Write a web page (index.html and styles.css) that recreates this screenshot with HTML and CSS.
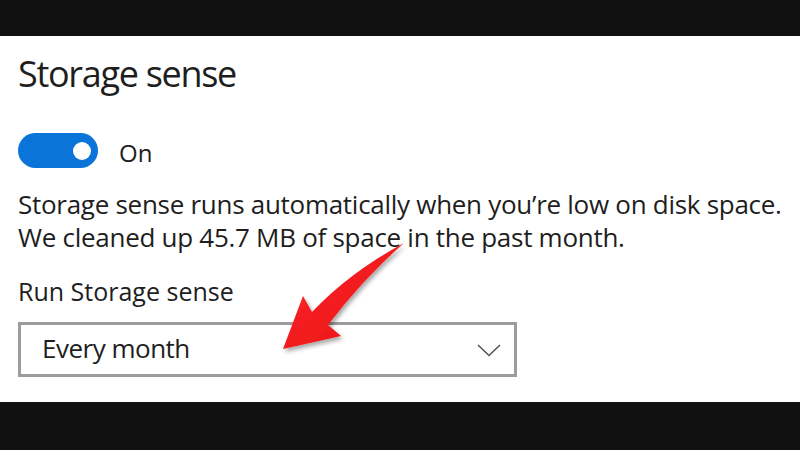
FILE: index.html
```html
<!DOCTYPE html>
<html lang="en">
<head>
<meta charset="utf-8">
<title>Storage sense</title>
<link rel="stylesheet" href="styles.css">
</head>
<body>
<div class="bar"></div>
<main class="panel">
  <h1 class="title">Storage sense</h1>
  <div class="toggle-row">
    <span class="toggle"><span class="knob"></span></span>
    <span class="toggle-label">On</span>
  </div>
  <p class="desc">
    <span class="line">Storage sense runs automatically when you’re low on disk space.</span>
    <span class="line">We cleaned up 45.7 MB of space in the past month.</span>
  </p>
  <div class="field-label">Run Storage sense</div>
  <div class="select">
    <span class="select-value">Every month</span>
    <svg class="chevron" width="24" height="13" viewBox="0 0 24 13"><path d="M1 1 L12 11.5 L23 1" fill="none" stroke="#555" stroke-width="1.6"/></svg>
  </div>
</main>
<div class="bar bottom"></div>
<svg class="arrow" width="800" height="450" viewBox="0 0 800 450">
  <defs>
    <linearGradient id="ag" x1="0" y1="0" x2="1" y2="1">
      <stop offset="0" stop-color="#ff2a2a"/>
      <stop offset="1" stop-color="#e60f14"/>
    </linearGradient>
    <filter id="sh" x="-20%" y="-20%" width="150%" height="150%">
      <feDropShadow dx="2" dy="3" stdDeviation="2" flood-color="#000" flood-opacity="0.35"/>
    </filter>
  </defs>
  <path d="M404 243 Q350 272 312 312 L303 296 L283 349 L341 336 L328 325 Q362 280 404 243 Z" fill="url(#ag)" filter="url(#sh)"/>
</svg>
</body>
</html>
```
FILE: styles.css
```css
* { box-sizing: border-box; }
html, body { margin: 0; padding: 0; }
body {
  width: 800px;
  height: 450px;
  background: #111111;
  font-family: "Open Sans", "Noto Sans", sans-serif;
  color: #1e1e1e;
  position: relative;
  overflow: hidden;
}
.bar { height: 36px; background: #111111; }
.bar.bottom { height: 48px; }
.panel {
  height: 366px;
  background: #ffffff;
  padding: 16px 0 0 18px;
}
.title {
  margin: 0;
  font-size: 36px;
  line-height: 44px;
  font-weight: 400;
  letter-spacing: -1.3px;
}
.toggle-row {
  margin-top: 37px;
  display: flex;
  align-items: flex-start;
  gap: 21px;
}
.toggle {
  width: 80px;
  height: 35px;
  border-radius: 18px;
  background: #0a74d8;
  display: flex;
  align-items: center;
  justify-content: flex-end;
  padding-right: 7px;
}
.knob {
  width: 18px;
  height: 18px;
  border-radius: 50%;
  background: #ffffff;
}
.toggle-label {
  font-size: 24px;
  line-height: 33px;
  padding-top: 3px;
}
.desc {
  margin: 19px 0 0 0;
  font-size: 26px;
  line-height: 33px;
  letter-spacing: -0.28px;
}
.line {
  display: block;
  white-space: nowrap;
}
.field-label {
  margin-top: 22px;
  font-size: 25px;
  line-height: 30px;
}
.select {
  margin-top: 16px;
  width: 499px;
  height: 55px;
  border: 3px solid #9c9c9c;
  display: flex;
  align-items: center;
  justify-content: space-between;
  padding: 0 13px 0 21px;
}
.select-value {
  font-size: 26px;
  line-height: 46px;
  padding-bottom: 3px;
  letter-spacing: -0.5px;
}
.chevron { display: block; margin-top: 2px; }
.arrow {
  position: absolute;
  left: 0;
  top: 0;
  pointer-events: none;
}
```
